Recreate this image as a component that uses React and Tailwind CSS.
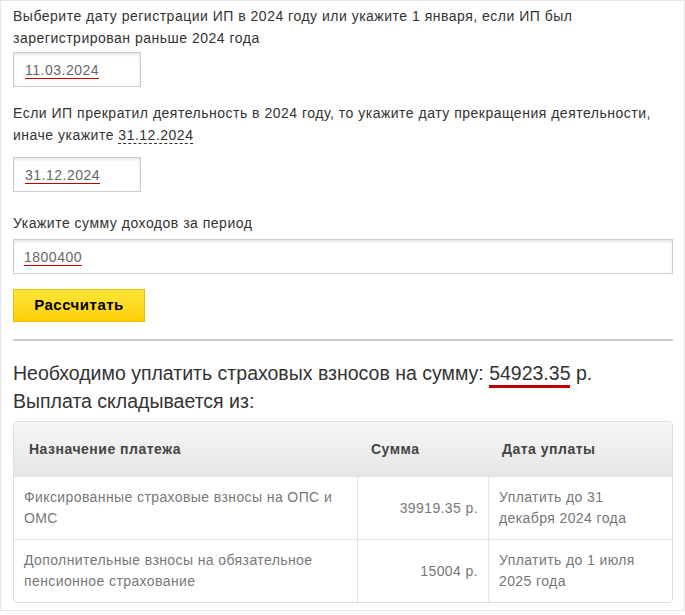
import React from 'react'

const font = { fontFamily: '"Liberation Sans", Arial, sans-serif' }

const rows = [
  {
    name: 'Фиксированные страховые взносы на ОПС и ОМС',
    sum: '39919.35 р.',
    date: 'Уплатить до 31 декабря 2024 года',
  },
  {
    name: 'Дополнительные взносы на обязательное пенсионное страхование',
    sum: '15004 р.',
    date: 'Уплатить до 1 июля 2025 года',
  },
]

function Field({ value, wide }) {
  return (
    <div
      className={
        'h-[35px] border border-[#cccccc] bg-white shadow-[inset_0_2px_3px_rgba(0,0,0,0.10)] flex items-center text-[14px] text-[#666666] ' +
        (wide ? 'w-[660px] pl-[10px]' : 'w-[128px] pl-[11px]')
      }>
      <span className="border-b border-[#c00000] leading-[16px] pt-[2px]">{value}</span>
    </div>
  )
}

export default function App() {
  return (
    <div className="bg-white" style={font}>
      <div className="w-[685px] h-[611px] border border-[#e6e6e6] pl-[12px] pt-[4px] text-[#333333] tracking-[0.5px]">
        <p className="text-[14px] leading-[22px] w-[668px]">
          Выберите дату регистрации ИП в 2024 году или укажите 1 января, если ИП был
          <br />
          зарегистрирован раньше 2024 года
        </p>
        <div className="mt-[3px]">
          <Field value="11.03.2024" />
        </div>

        <p className="text-[14px] leading-[22px] w-[668px] mt-[15px]">
          Если ИП прекратил деятельность в 2024 году, то укажите дату прекращения деятельности,
          <br />
          иначе укажите{' '}
          <span className="border-b border-dashed border-[#333333]">31.12.2024</span>
        </p>
        <div className="mt-[11px]">
          <Field value="31.12.2024" />
        </div>

        <p className="text-[14px] leading-[22px] mt-[20px]">Укажите сумму доходов за период</p>
        <div className="mt-[5px]">
          <Field value="1800400" wide />
        </div>

        <button className="mt-[15px] w-[132px] h-[33px] border border-[#e8c300] bg-gradient-to-b from-[#ffe635] to-[#ffd000] text-[15px] font-bold text-black tracking-[0.5px]">
          Рассчитать
        </button>

        <div className="mt-[17px] w-[660px] border-t-2 border-[#cccccc]" />

        <div className="mt-[18px] text-[19.5px] leading-[28px] text-[#333333] tracking-normal">
          <div>
            Необходимо уплатить страховых взносов на сумму:{' '}
            <span className="border-b-[3px] border-[#c00000] pb-[1px]">54923.35</span> р.
          </div>
          <div>Выплата складывается из:</div>
        </div>

        <div className="mt-[6px] w-[660px] border border-[#dddddd] rounded-[4px] overflow-hidden text-[14px]">
          <div className="grid grid-cols-[343px_131px_1fr] bg-gradient-to-b from-[#f7f7f7] to-[#e6e6e6] font-bold text-[#444444] leading-[20px] tracking-[0.5px]">
            <div className="pl-[15px] py-[17px]">Назначение платежа</div>
            <div className="pl-[14px] py-[17px]">Сумма</div>
            <div className="pl-[14px] py-[17px]">Дата уплаты</div>
          </div>
          {rows.map((r, i) => (
            <div
              key={i}
              className="grid grid-cols-[343px_131px_1fr] border-t border-[#e2e2e2] text-[#777777] leading-[21px] tracking-[0.4px]">
              <div className="px-[10px] py-[10px] pr-[4px]">{r.name}</div>
              <div className="border-l border-[#e2e2e2] px-[10px] py-[10px] flex items-center justify-end">
                {r.sum}
              </div>
              <div className="border-l border-[#e2e2e2] px-[10px] py-[10px] pr-[30px]">{r.date}</div>
            </div>
          ))}
        </div>
      </div>
    </div>
  )
}
